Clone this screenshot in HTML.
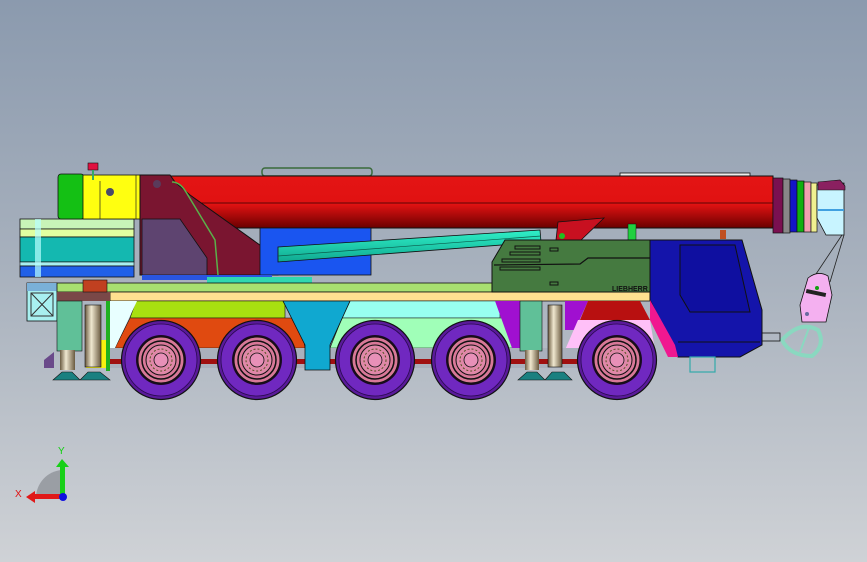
<!DOCTYPE html>
<html><head><meta charset="utf-8"><style>
html,body{margin:0;padding:0;width:867px;height:562px;overflow:hidden}
body{background:linear-gradient(#8b9aae 0%,#a9b2be 50%,#cfd2d6 100%);font-family:"Liberation Sans",sans-serif}
svg{position:absolute;left:0;top:0}
</style></head><body>
<svg width="867" height="562" viewBox="0 0 867 562" xmlns="http://www.w3.org/2000/svg">
<defs>
<linearGradient id="boom" x1="0" y1="0" x2="0" y2="1">
<stop offset="0" stop-color="#e41414"/><stop offset="0.55" stop-color="#e01212"/><stop offset="1" stop-color="#6a0000"/></linearGradient>
<linearGradient id="cyl" x1="0" y1="0" x2="0" y2="1">
<stop offset="0" stop-color="#30f0c8"/><stop offset="1" stop-color="#10a890"/></linearGradient>
<linearGradient id="rod" x1="0" y1="0" x2="1" y2="0">
<stop offset="0" stop-color="#6a5a40"/><stop offset="0.4" stop-color="#f0e8d0"/><stop offset="1" stop-color="#6a5a40"/></linearGradient>
<g id="wheel">
<circle r="39.5" fill="#5a1a9a" stroke="#111" stroke-width="1.2"/>
<circle r="36" fill="#7028c0" stroke="#2a0a50" stroke-width="0.8"/>
<circle r="25" fill="#1a0a20"/>
<circle r="23" fill="#d87898" stroke="#111" stroke-width="1"/>
<circle r="19" fill="none" stroke="#111" stroke-width="1.5"/>
<circle r="15" fill="#e088a8" stroke="#111" stroke-width="1"/>
<circle r="11" fill="none" stroke="#552" stroke-width="1" stroke-dasharray="2 2"/>
<circle r="7" fill="#e890b8" stroke="#111" stroke-width="0.8"/>
</g>
</defs>

<!-- boom -->
<rect x="262" y="168" width="110" height="8" fill="none" stroke="#3a6a3a" stroke-width="1.5" rx="3"/>
<rect x="620" y="173" width="130" height="3" fill="#eee" stroke="#111" stroke-width="0.8"/>
<rect x="165" y="176" width="608" height="52" fill="url(#boom)" stroke="#111" stroke-width="1"/>
<line x1="165" y1="203" x2="773" y2="203" stroke="#300" stroke-width="0.8"/>
<rect x="773" y="178" width="10" height="55" fill="#7a1050" stroke="#111" stroke-width="0.7"/>
<rect x="783" y="179" width="7" height="54" fill="#888" stroke="#111" stroke-width="0.7"/>
<rect x="790" y="180" width="7" height="52" fill="#1414c8" stroke="#111" stroke-width="0.7"/>
<rect x="797" y="181" width="7" height="51" fill="#10b010" stroke="#111" stroke-width="0.7"/>
<rect x="804" y="182" width="7" height="50" fill="#f0a0b0" stroke="#111" stroke-width="0.7"/>
<rect x="811" y="183" width="6" height="49" fill="#f0f090" stroke="#111" stroke-width="0.7"/>
<path d="M817 185 L844 183 L844 235 L826 235 L817 218 Z" fill="#c8f4ff" stroke="#111" stroke-width="0.8"/>
<rect x="818" y="209" width="26" height="2" fill="#40a0e0"/>
<path d="M818 182 L840 180 L845 186 L845 190 L818 190Z" fill="#8a2060" stroke="#111" stroke-width="0.6"/>
<!-- hoist ropes & hook -->
<line x1="842" y1="235" x2="816" y2="274" stroke="#222" stroke-width="0.8"/>
<line x1="844" y1="235" x2="830" y2="282" stroke="#222" stroke-width="0.8"/>
<path d="M808 278 Q818 270 828 276 L832 295 L826 322 L802 322 L800 305 Z" fill="#f4b0f0" stroke="#111" stroke-width="0.8"/>
<circle cx="817" cy="288" r="2" fill="#10a010"/>
<rect x="806" y="291" width="20" height="4" fill="#222" transform="rotate(12 816 293)"/>
<circle cx="807" cy="314" r="2" fill="#6a6aa0"/>
<path d="M782 340 Q800 320 818 330 Q826 345 812 356 Q790 356 782 340 Z" fill="none" stroke="#8ad8c0" stroke-width="4"/>
<line x1="810" y1="325" x2="800" y2="352" stroke="#8ad8c0" stroke-width="2"/>

<!-- left counterweight stack -->
<rect x="20" y="219" width="114" height="10" fill="#c8f4b8" stroke="#111" stroke-width="0.8"/>
<rect x="20" y="229" width="114" height="8" fill="#e0ffa0" stroke="#111" stroke-width="0.8"/>
<rect x="20" y="237" width="114" height="25" fill="#14b8b0" stroke="#111" stroke-width="0.8"/>
<rect x="20" y="262" width="114" height="4" fill="#a8f0f0" stroke="#111" stroke-width="0.6"/>
<rect x="20" y="266" width="114" height="11" fill="#2060e8" stroke="#111" stroke-width="0.8"/>
<rect x="35" y="219" width="6" height="58" fill="#b8ffff" opacity="0.7"/>
<rect x="58" y="174" width="26" height="45" fill="#14c014" stroke="#111" stroke-width="0.8" rx="3"/>
<rect x="83" y="175" width="58" height="44" fill="#ffff10" stroke="#111" stroke-width="0.8"/>
<line x1="100" y1="181" x2="100" y2="219" stroke="#222" stroke-width="0.7"/>
<line x1="136" y1="175" x2="136" y2="219" stroke="#222" stroke-width="0.7"/>
<circle cx="110" cy="192" r="4" fill="#4a4a6a"/>
<rect x="88" y="163" width="10" height="7" fill="#e01040" stroke="#111" stroke-width="0.6"/>
<rect x="92" y="170" width="2" height="10" fill="#3a6"/>
<!-- turret maroon -->
<path d="M140 175 L170 175 L175 182 L190 195 L278 258 L278 275 L140 275 Z" fill="#7a1530" stroke="#111" stroke-width="1"/>
<path d="M142 219 L180 219 L207 258 L207 275 L142 275 Z" fill="#5e4470" stroke="#111" stroke-width="0.8"/>
<path d="M172 182 Q180 182 186 192 L215 240 L218 275" fill="none" stroke="#5ab04a" stroke-width="1.5"/>
<circle cx="157" cy="184" r="4" fill="#5a3a5a"/>
<circle cx="272" cy="255" r="3" fill="#f088c8"/>
<rect x="260" y="228" width="111" height="47" fill="#1a55f0" stroke="#111" stroke-width="0.8"/>
<rect x="142" y="275" width="130" height="5" fill="#2a55e0"/>
<rect x="207" y="277" width="105" height="7" fill="#30d8b0"/>
<!-- lift cylinder -->
<path d="M278 247 L540 230 L541 242 L278 262 Z" fill="url(#cyl)" stroke="#111" stroke-width="0.8"/>
<path d="M278 256 L541 236" stroke="#0a5a4a" stroke-width="0.7"/>
<path d="M558 222 L604 218 L580 241 L556 240Z" fill="#c81020" stroke="#111" stroke-width="0.8"/>
<circle cx="562" cy="236" r="3" fill="#20c020"/>
<rect x="628" y="224" width="8" height="16" fill="#20d040" stroke="#111" stroke-width="0.5"/>
<rect x="720" y="230" width="6" height="9" fill="#c05020"/>

<!-- chassis -->
<rect x="27" y="283" width="30" height="38" fill="#a8f0f0" stroke="#111" stroke-width="0.8"/>
<rect x="27" y="283" width="30" height="8" fill="#7ab0d8"/>
<path d="M31 293 L53 316 M53 293 L31 316" stroke="#333" stroke-width="1"/>
<rect x="31" y="293" width="22" height="23" fill="none" stroke="#333" stroke-width="1"/>
<rect x="57" y="283" width="440" height="9" fill="#a8e070" stroke="#111" stroke-width="0.8"/>
<rect x="110" y="292" width="540" height="9" fill="#ffe090" stroke="#111" stroke-width="0.8"/>
<rect x="57" y="292" width="53" height="9" fill="#7a4848"/>
<rect x="83" y="280" width="24" height="12" fill="#c04020" stroke="#111" stroke-width="0.6"/>
<path d="M136 301 L285 301 L285 318 L130 318 Z" fill="#a8e010" stroke="#111" stroke-width="0.6"/>
<path d="M130 318 L300 318 L305 348 L115 348 Z" fill="#e04a10" stroke="#111" stroke-width="0.6"/>
<path d="M110 301 L137 301 L115 348 L110 348Z" fill="#e8ffff"/>
<path d="M350 301 L500 301 L500 318 L342 318Z" fill="#98fff0" stroke="#111" stroke-width="0.6"/>
<path d="M342 318 L505 318 L515 348 L330 348Z" fill="#a0ffb8" stroke="#111" stroke-width="0.6"/>
<path d="M495 301 L520 301 L520 348 L512 348Z" fill="#a010d0"/>
<path d="M565 301 L588 301 L575 330 L565 330Z" fill="#a010d0"/>
<path d="M588 301 L640 301 L650 320 L580 320Z" fill="#b81010"/>
<path d="M578 320 L650 320 L655 350 L565 350Z" fill="#ffc0f8"/>
<rect x="110" y="348" width="545" height="20" fill="#aab0bc"/>
<rect x="110" y="359" width="545" height="5" fill="#a01010"/>
<path d="M283 301 L350 301 L330 345 L330 370 L305 370 L305 345 Z" fill="#10a8d0" stroke="#111" stroke-width="0.8"/>
<rect x="86" y="340" width="20" height="28" fill="#f8f010"/>
<!-- outriggers -->
<rect x="57" y="301" width="25" height="50" fill="#60c098" stroke="#111" stroke-width="0.6"/>
<rect x="520" y="301" width="22" height="50" fill="#60c098" stroke="#111" stroke-width="0.6"/>
<rect x="106" y="301" width="4" height="70" fill="#20b020"/>
<rect x="85" y="305" width="16" height="62" fill="url(#rod)" stroke="#111" stroke-width="0.6"/>
<rect x="60" y="350" width="15" height="20" fill="url(#rod)"/>
<rect x="548" y="305" width="14" height="62" fill="url(#rod)" stroke="#111" stroke-width="0.6"/>
<rect x="525" y="350" width="14" height="20" fill="url(#rod)"/>
<path d="M53 380 L80 380 L72 372 L62 372Z M80 380 L110 380 L100 372 L88 372Z M518 380 L545 380 L537 372 L527 372Z M545 380 L572 380 L564 372 L552 372Z" fill="#1a8080" stroke="#111" stroke-width="0.6"/>
<path d="M44 360 L54 352 L54 368 L44 368Z" fill="#6a4a8a"/>
<!-- wheels -->
<use href="#wheel" x="161" y="360"/>
<use href="#wheel" x="257" y="360"/>
<use href="#wheel" x="375" y="360"/>
<use href="#wheel" x="471" y="360"/>
<use href="#wheel" x="617" y="360"/>

<!-- engine hood -->
<path d="M505 240 L650 240 L650 292 L492 292 L492 262 Z" fill="#457a40" stroke="#111" stroke-width="1"/>
<path d="M494 265 L580 264 L588 258 L650 258" fill="none" stroke="#111" stroke-width="1.2"/>
<g stroke="#111" stroke-width="1" fill="none">
<rect x="515" y="246" width="25" height="3"/><rect x="510" y="252" width="30" height="3"/><rect x="502" y="259" width="38" height="3"/><rect x="500" y="267" width="40" height="3"/>
<rect x="550" y="248" width="8" height="3"/><rect x="550" y="282" width="8" height="3"/></g>
<text x="612" y="291" font-size="7" font-weight="bold" fill="#111" font-family="Liberation Sans">LIEBHERR</text>
<!-- cab -->
<path d="M650 240 L742 240 L762 310 L762 345 L740 357 L678 357 L650 300 Z" fill="#1414aa" stroke="#111" stroke-width="1"/>
<path d="M680 245 L735 245 L750 312 L690 312 L680 295 Z" fill="#0f0fa0" stroke="#111" stroke-width="1"/>
<path d="M650 300 L675 345 L678 357 L668 357 L650 320Z" fill="#f01890"/>
<line x1="678" y1="342" x2="760" y2="342" stroke="#111" stroke-width="1"/>
<rect x="690" y="357" width="25" height="15" fill="none" stroke="#3aa" stroke-width="1.2"/>
<rect x="762" y="333" width="18" height="8" fill="none" stroke="#111" stroke-width="0.8"/>

<!-- axis triad -->
<path d="M36 498 A28 28 0 0 1 62 470 L62 498 Z" fill="#9a9ea4"/>
<rect x="60" y="465" width="5" height="32" fill="#18d018"/>
<path d="M56 467 L62 459 L69 467 Z" fill="#18d018"/>
<rect x="33" y="494" width="28" height="5" fill="#e01818"/>
<path d="M35 491 L26 497 L35 503 Z" fill="#e01818"/>
<circle cx="63" cy="497" r="4" fill="#1010e0"/>
<text x="58" y="454" font-size="10" fill="#10d010" font-family="Liberation Sans">Y</text>
<text x="15" y="497" font-size="10" fill="#e01010" font-family="Liberation Sans">X</text>
</svg>
</body></html>
